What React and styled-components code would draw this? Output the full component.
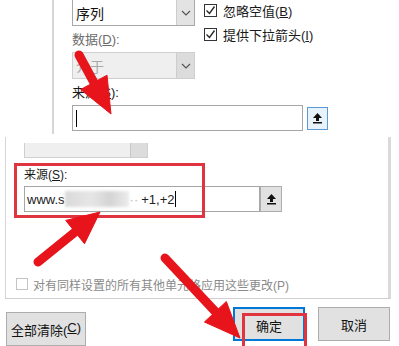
import React from 'react';
import styled, { createGlobalStyle } from 'styled-components';

const GlobalStyle = createGlobalStyle`
  body {
    margin: 0;
    background: #fff;
    font-family: "Liberation Sans", "Noto Sans CJK SC", sans-serif;
  }
`;

const Page = styled.div`
  position: relative;
  width: 399px;
  height: 346px;
  overflow: hidden;
  background: #fff;
`;

/* ---------- top (zoomed) shot ---------- */

const TopShot = styled.div`
  display: flex;
  height: 137px;
  padding-left: 52px;
  box-sizing: border-box;
`;

const TopPage = styled.div`
  display: flex;
  flex-direction: column;
  height: 134px;
  padding-left: 18px;
  border-left: 2px solid #d6d6d6;
`;

const TopRow = styled.div`
  display: flex;
  gap: 9px;
`;

const Column = styled.div`
  display: flex;
  flex-direction: column;
  width: ${(p) => p.$w || 'auto'};
  gap: ${(p) => p.$gap || 0}px;
`;

const Select = styled.div`
  display: flex;
  height: ${(p) => p.$h}px;
  box-sizing: border-box;
  border: 1px solid ${(p) => (p.$disabled ? '#cfcfcf' : '#a8a8a8')};
  border-top: ${(p) => (p.$cut ? 'none' : undefined)};
  margin-top: ${(p) => p.$mt || 0}px;
  background: ${(p) => (p.$disabled ? '#efefef' : '#fff')};
  color: ${(p) => (p.$disabled ? '#a9a9a9' : '#111')};
  font-size: ${(p) => p.$fs || 14}px;
`;

const SelectValue = styled.div`
  flex: 1;
  display: flex;
  align-items: center;
  padding-left: 3px;
`;

const SelectButton = styled.div`
  width: 17px;
  display: flex;
  align-items: center;
  justify-content: center;
  background: ${(p) => (p.$disabled ? '#dcdcdc' : '#e3e3e3')};
  border-left: 1px solid #cdcdcd;
`;

const Label = styled.div`
  height: 16px;
  line-height: 16px;
  margin-top: ${(p) => p.$mt || 0}px;
  margin-left: ${(p) => p.$ml || 0}px;
  font-size: ${(p) => p.$fs || 13}px;
  color: ${(p) => p.$color || '#1a1a1a'};
`;

const CheckRow = styled.div`
  display: flex;
  align-items: center;
  gap: ${(p) => p.$gap || 6}px;
  height: ${(p) => p.$h || 20}px;
  margin-top: ${(p) => p.$mt || 0}px;
  margin-left: ${(p) => p.$ml || 0}px;
  font-size: ${(p) => p.$fs || 13}px;
  color: ${(p) => p.$color || '#1a1a1a'};
  white-space: nowrap;
`;

const Box = styled.div`
  width: ${(p) => p.$size}px;
  height: ${(p) => p.$size}px;
  box-sizing: border-box;
  border: 1px solid ${(p) => (p.$disabled ? '#c4c4c4' : '#333')};
  background: #fff;
  display: flex;
  align-items: center;
  justify-content: center;
`;

const InputRow = styled.div`
  display: flex;
  align-items: center;
  gap: ${(p) => p.$gap || 0}px;
  margin-top: ${(p) => p.$mt || 0}px;
  margin-left: ${(p) => p.$ml || 0}px;
`;

const Input = styled.div`
  display: flex;
  align-items: center;
  width: ${(p) => p.$w}px;
  height: ${(p) => p.$h}px;
  box-sizing: border-box;
  border: 1px solid #a6a6a6;
  background: #fff;
  padding-left: 2px;
  font-size: 13px;
  color: #222;
  white-space: nowrap;
`;

const Caret = styled.span`
  display: inline-block;
  width: 1px;
  height: ${(p) => p.$h}px;
  background: #000;
  margin-left: ${(p) => p.$ml || 0}px;
`;

const RangeButton = styled.div`
  width: ${(p) => p.$w}px;
  height: ${(p) => p.$h}px;
  box-sizing: border-box;
  display: flex;
  align-items: center;
  justify-content: center;
  border: 1px solid ${(p) => (p.$focus ? '#5b9bd5' : '#adadad')};
  background: ${(p) => (p.$focus ? '#e8f2fb' : '#e1e1e1')};
`;

const Blur = styled.span`
  display: inline-block;
  width: 64px;
  height: 16px;
  background: linear-gradient(90deg, #d9d9d9, #e6e6e6 40%, #d4d4d4 70%, #ececec);
  filter: blur(1.5px);
`;

const Faint = styled.span`
  color: #bbb;
  margin: 0 3px 0 1px;
`;

/* ---------- bottom shot ---------- */

const BottomShot = styled.div`
  display: flex;
  flex-direction: column;
  height: 209px;
  padding: 0 8px 0 5px;
  background: #fff;
`;

const BottomPage = styled.div`
  display: flex;
  flex-direction: column;
  height: 168px;
  box-sizing: border-box;
  border-left: 1px solid #d4d4d4;
  border-right: 3px solid #dadada;
  border-bottom: 1px solid #cfcfcf;
`;

const Stub = styled.div`
  display: flex;
  width: 124px;
  height: 15px;
  margin: 6px 0 0 18px;
  box-sizing: border-box;
  border: 1px solid #cfcfcf;
  border-top: none;
  background: #efefef;
`;

const StubButton = styled.div`
  margin-left: auto;
  width: 16px;
  background: #dcdcdc;
  border-left: 1px solid #c8c8c8;
`;

const Footer = styled.div`
  display: flex;
  align-items: flex-start;
  margin-top: 8px;
  padding-left: 1px;
`;

const Button = styled.div`
  width: ${(p) => p.$w}px;
  height: 34px;
  margin-top: ${(p) => p.$mt || 0}px;
  margin-left: ${(p) => p.$ml || 0}px;
  box-sizing: border-box;
  display: flex;
  justify-content: center;
  padding-top: 7px;
  font-size: 13px;
  color: #111;
  background: #e1e1e1;
  border: ${(p) => (p.$primary ? '2px solid #0078d7' : '1px solid #adadad')};
`;

/* ---------- annotations ---------- */

const Mark = styled.div`
  position: absolute;
  left: ${(p) => p.$x}px;
  top: ${(p) => p.$y}px;
  width: ${(p) => p.$w}px;
  height: ${(p) => p.$h}px;
  box-sizing: border-box;
  border: 3px solid #e03440;
  pointer-events: none;
`;

const Overlay = styled.svg`
  position: absolute;
  left: 0;
  top: 0;
  pointer-events: none;
`;

const Chevron = () => (
  <svg width="10" height="6" viewBox="0 0 10 6">
    <path d="M1 1l4 4 4-4" fill="none" stroke="#555" strokeWidth="1.2" />
  </svg>
);

const Tick = () => (
  <svg width="11" height="11" viewBox="0 0 11 11">
    <path d="M1.5 5.5l3 3 5-7" fill="none" stroke="#222" strokeWidth="1.3" />
  </svg>
);

const UpIcon = () => (
  <svg width="11" height="12" viewBox="0 0 11 12">
    <path d="M5.5 1L1 6h3v3h3V6h3z" fill="#111" />
    <rect x="1" y="10" width="9" height="1.5" fill="#111" />
  </svg>
);

// arrow from tail to tip with a triangular head
const arrow = (tx, ty, hx, hy, len, half) => {
  const dx = hx - tx;
  const dy = hy - ty;
  const d = Math.hypot(dx, dy);
  const ux = dx / d;
  const uy = dy / d;
  const bx = hx - ux * len;
  const by = hy - uy * len;
  const px = -uy;
  const py = ux;
  return {
    shaft: [tx, ty, bx + ux * 2, by + uy * 2],
    head: `${hx},${hy} ${bx + px * half},${by + py * half} ${bx - px * half},${by - py * half}`,
  };
};

const arrows = [
  arrow(79, 55, 111, 114, 36, 15),
  arrow(38, 262, 100, 212, 32, 15),
  arrow(165, 258, 240, 338, 36, 15),
];

export default function App() {
  return (
    <>
      <GlobalStyle />
      <Page>
        <TopShot>
          <TopPage>
            <TopRow>
              <Column $w="123px">
                <Select $h={26} $cut>
                  <SelectValue>序列</SelectValue>
                  <SelectButton><Chevron /></SelectButton>
                </Select>
                <Label $mt={6} $color="#6b6b6b">数据(<u>D</u>):</Label>
                <Select $h={27} $mt={4} $disabled>
                  <SelectValue>介于</SelectValue>
                  <SelectButton $disabled><Chevron /></SelectButton>
                </Select>
              </Column>
              <Column $gap={4}>
                <CheckRow>
                  <Box $size={13}><Tick /></Box>
                  <span>忽略空值(<u>B</u>)</span>
                </CheckRow>
                <CheckRow>
                  <Box $size={13}><Tick /></Box>
                  <span>提供下拉箭头(<u>I</u>)</span>
                </CheckRow>
              </Column>
            </TopRow>
            <Label $mt={6}>来源(<u>S</u>):</Label>
            <InputRow $mt={4} $gap={4}>
              <Input $w={231} $h={26}>
                <Caret $h={17} $ml={1} />
              </Input>
              <RangeButton $w={21} $h={23} $focus><UpIcon /></RangeButton>
            </InputRow>
          </TopPage>
        </TopShot>

        <BottomShot>
          <BottomPage>
            <Stub><StubButton /></Stub>
            <Label $mt={9} $ml={18} $fs={12}>来源(<u>S</u>):</Label>
            <InputRow $mt={3} $ml={18}>
              <Input $w={236} $h={26}>
                www.s<Blur /><Faint>··</Faint>+1,+2
                <Caret $h={16} />
              </Input>
              <RangeButton $w={22} $h={26}><UpIcon /></RangeButton>
            </InputRow>
            <CheckRow $mt={64} $ml={10} $h={16} $gap={5} $fs={12} $color="#8a8a8a">
              <Box $size={12} $disabled />
              <span>对有同样设置的所有其他单元格应用这些更改(P)</span>
            </CheckRow>
          </BottomPage>
          <Footer>
            <Button $w={80} $mt={5}>全部清除(<u>C</u>)</Button>
            <Button $w={72} $ml={147} $primary>确定</Button>
            <Button $w={72} $ml={13}>取消</Button>
          </Footer>
        </BottomShot>

        <Mark $x={14} $y={163} $w={191} $h={55} />
        <Mark $x={242} $y={313} $w={65} $h={36} />

        <Overlay width="399" height="346" viewBox="0 0 399 346">
          {arrows.map((a, i) => (
            <g key={i} fill="#e8141c" stroke="#e8141c">
              <line
                x1={a.shaft[0]}
                y1={a.shaft[1]}
                x2={a.shaft[2]}
                y2={a.shaft[3]}
                strokeWidth="9"
                strokeLinecap="round"
              />
              <polygon points={a.head} strokeWidth="1" strokeLinejoin="round" />
            </g>
          ))}
        </Overlay>
      </Page>
    </>
  );
}
